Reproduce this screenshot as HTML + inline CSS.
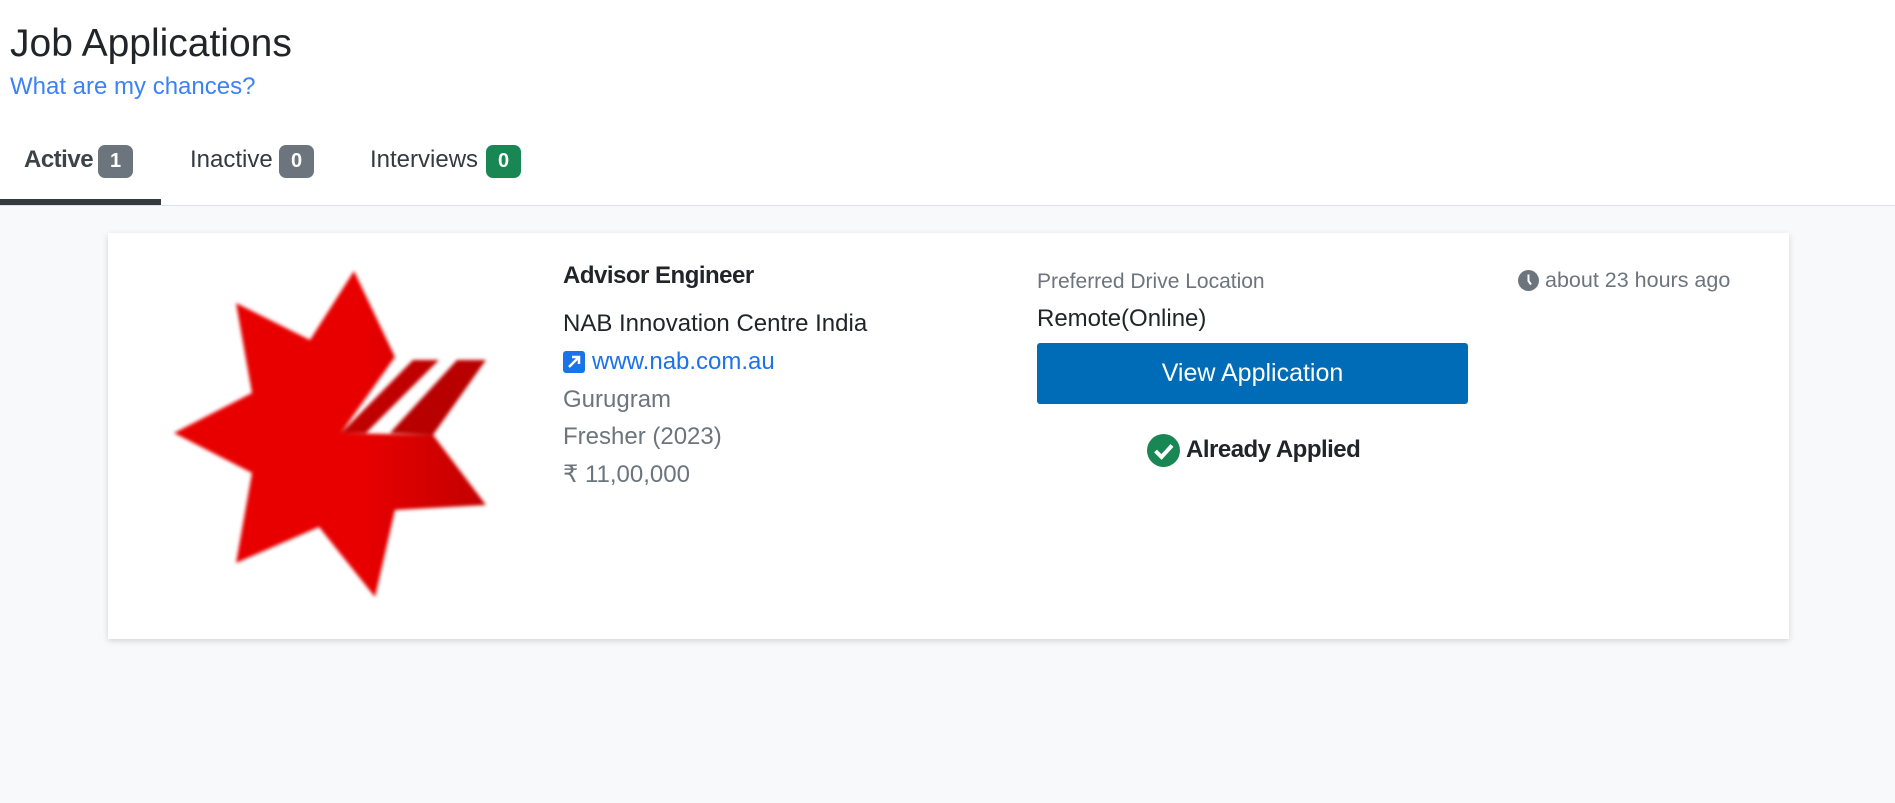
<!DOCTYPE html>
<html><head><meta charset="utf-8"><style>
*{margin:0;padding:0;box-sizing:border-box}
body{width:1895px;height:803px;background:#f8f9fa;font-family:"Liberation Sans",sans-serif;position:relative;overflow:hidden}
.top{position:absolute;left:0;top:0;width:1895px;height:206px;background:#fff;border-bottom:1px solid #dee2e6}
.abs{position:absolute;white-space:nowrap}
.badge{position:absolute;height:33px;width:35px;border-radius:7px;color:#fff;font-weight:bold;font-size:20px;text-align:center;line-height:33px}
.card{position:absolute;left:108px;top:233px;width:1681px;height:406px;background:#fff;box-shadow:0 2px 6px rgba(0,0,0,.15)}
</style></head><body>
<div class="top">
<div class="abs" style="left:10px;top:22px;font-size:39px;color:#212529">Job Applications</div>
<div class="abs" style="left:10px;top:73px;font-size:24px;color:#3b82f6">What are my chances?</div>
<div class="abs" style="left:24px;top:146px;font-size:24px;color:#3d4349;font-weight:bold;letter-spacing:-0.5px">Active</div>
<div class="badge" style="left:98px;top:145px;background:#6c757d">1</div>
<div class="abs" style="left:190px;top:146px;font-size:24px;color:#343a40">Inactive</div>
<div class="badge" style="left:279px;top:145px;background:#6c757d">0</div>
<div class="abs" style="left:370px;top:146px;font-size:24px;color:#343a40">Interviews</div>
<div class="badge" style="left:486px;top:145px;background:#198754">0</div>
<div class="abs" style="left:0;top:199px;width:161px;height:6px;background:#343a40"></div>
</div>
<div class="card"></div>
<svg class="abs" style="left:0;top:0" width="600" height="700">
<defs><filter id="b"><feGaussianBlur stdDeviation="1.8"/></filter>
<linearGradient id="g" x1="0" x2="1"><stop offset="0.6" stop-color="#e80000"/><stop offset="1" stop-color="#c20000"/></linearGradient></defs>
<g filter="url(#b)">
<polygon fill="url(#g)" points="354,271 395,357 341,433 433,435 486,505 395,510 375,597 319,527 236,563 252,473 174,433 252,393 236,303 310,340"/>
<polygon fill="#c00000" points="341,433 413,360 439,360 366,433"/>
<polygon fill="#b80000" points="390,433 457,360 486,360 433,435"/>
</g></svg>
<div class="abs" style="left:563px;top:262px;font-size:24px;font-weight:bold;color:#212529;letter-spacing:-0.5px">Advisor Engineer</div>
<div class="abs" style="left:563px;top:310px;font-size:24px;color:#212529">NAB Innovation Centre India</div>
<svg class="abs" style="left:563px;top:351px" width="22" height="22"><rect width="22" height="22" rx="3" fill="#1a73e8"/><path d="M6 16 L15 7 M9 6 H16 V13" stroke="#fff" stroke-width="2.5" fill="none"/></svg>
<div class="abs" style="left:592px;top:348px;font-size:24px;color:#1a73e8">www.nab.com.au</div>
<div class="abs" style="left:563px;top:386px;font-size:24px;color:#6c757d">Gurugram</div>
<div class="abs" style="left:563px;top:423px;font-size:24px;color:#6c757d">Fresher (2023)</div>
<div class="abs" style="left:563px;top:460px;font-size:24px;color:#6c757d">₹ 11,00,000</div>
<div class="abs" style="left:1037px;top:270px;font-size:21px;color:#6c757d">Preferred Drive Location</div>
<div class="abs" style="left:1037px;top:305px;font-size:24px;color:#212529">Remote(Online)</div>
<div class="abs" style="left:1037px;top:343px;width:431px;height:61px;background:#006cb7;border-radius:3px;color:#fff;font-size:25px;text-align:center;line-height:61px">View Application</div>
<svg class="abs" style="left:1147px;top:434px" width="33" height="33"><circle cx="16.5" cy="16.5" r="16.5" fill="#198754"/><path d="M8.5 17 L14.5 23 L25 11.5" stroke="#fff" stroke-width="4" fill="none"/></svg>
<div class="abs" style="left:1186px;top:436px;font-size:24px;font-weight:bold;color:#212529;letter-spacing:-0.5px">Already Applied</div>
<svg class="abs" style="left:1518px;top:270px" width="21" height="21"><circle cx="10.5" cy="10.5" r="10.5" fill="#6c757d"/><path d="M10.5 4.5 V11 L13 14.5" stroke="#fff" stroke-width="2" fill="none"/></svg>
<div class="abs" style="left:1545px;top:268px;font-size:21.5px;color:#6c757d">about 23 hours ago</div>
</body></html>
